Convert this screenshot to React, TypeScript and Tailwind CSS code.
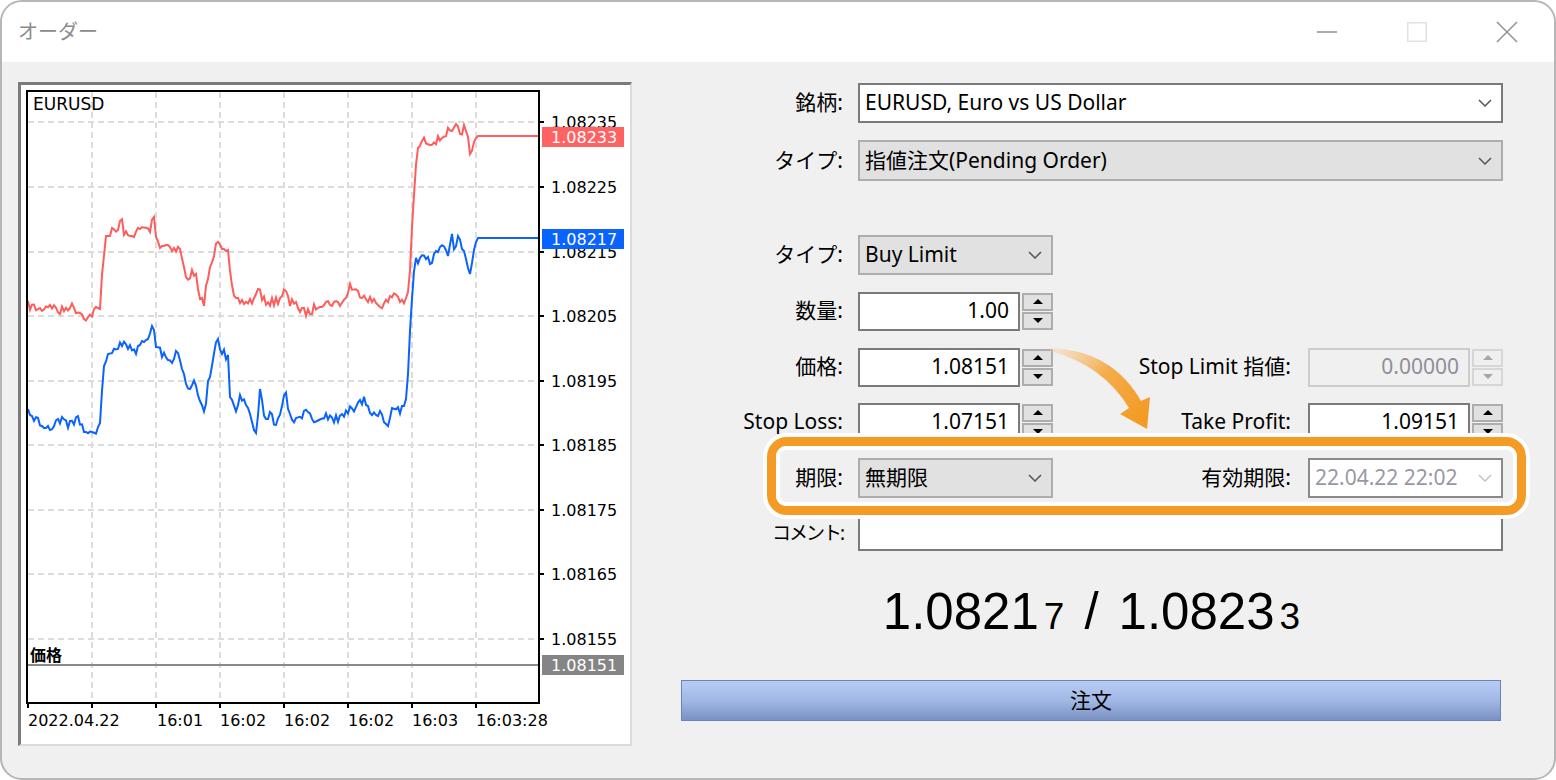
import React from "react";

const redKeys = [
  [28, 305], [40, 310], [50, 304], [60, 312], [70, 305], [80, 312], [88, 318], [95, 310], [100, 310],
  [103, 260], [106, 235], [112, 232], [118, 230], [121, 218], [125, 235], [130, 237], [135, 232],
  [140, 230], [145, 228], [150, 232], [153, 212], [157, 240], [160, 245], [170, 245], [175, 250],
  [180, 248], [183, 265], [186, 278], [195, 272], [198, 290], [200, 302], [204, 302], [207, 282],
  [210, 270], [214, 255], [218, 238], [222, 245], [228, 248], [231, 285], [235, 302], [245, 302],
  [255, 300], [258, 285], [262, 300], [272, 302], [278, 300], [285, 290], [290, 305], [296, 300],
  [300, 312], [310, 312], [320, 303], [340, 303], [345, 300], [350, 285], [355, 292], [365, 295],
  [370, 300], [380, 305], [388, 302], [395, 292], [400, 300], [406, 302], [409, 290], [412, 230],
  [415, 175], [418, 150], [421, 142], [438, 140], [442, 137], [447, 131], [452, 135], [456, 128],
  [460, 133], [464, 128], [468, 140], [471, 158], [474, 142], [477, 136], [539, 136],
];

const blueKeys = [
  [28, 413], [35, 420], [42, 422], [48, 428], [55, 425], [62, 420], [70, 425], [78, 420], [84, 428],
  [87, 437], [92, 428], [97, 430], [100, 427], [102, 392], [104, 363], [108, 352], [118, 350],
  [122, 343], [128, 348], [135, 352], [142, 345], [148, 342], [152, 323], [156, 345], [162, 355],
  [168, 360], [172, 365], [178, 350], [182, 365], [186, 383], [190, 390], [195, 383], [200, 397],
  [205, 410], [208, 382], [211, 370], [215, 345], [218, 343], [222, 350], [228, 358], [230, 393],
  [235, 410], [240, 397], [246, 405], [251, 420], [256, 430], [260, 393], [265, 420], [270, 415],
  [276, 425], [282, 405], [285, 392], [290, 415], [296, 420], [305, 413], [315, 420], [325, 415],
  [335, 420], [345, 413], [355, 408], [365, 400], [370, 410], [375, 418], [380, 408], [385, 422],
  [388, 425], [393, 405], [397, 412], [402, 408], [406, 400], [408, 370], [410, 330], [413, 285],
  [415, 258], [420, 262], [425, 255], [430, 265], [435, 255], [440, 250], [443, 240], [448, 252],
  [452, 235], [455, 252], [458, 235], [462, 250], [466, 260], [470, 270], [474, 250], [477, 238],
  [539, 238],
];

// turn the key points into a jagged tick line
function series(keys: number[][], seed: number) {
  let s = seed;
  const rnd = () => {
    s = (s * 16807) % 2147483647;
    return s / 2147483647;
  };
  const pts: string[] = [];
  let k = 0;
  for (let x = 28; x <= 539; x += 2) {
    while (k < keys.length - 2 && keys[k + 1][0] < x) k++;
    const [x0, y0] = keys[k];
    const [x1, y1] = keys[k + 1];
    const t = Math.min(1, Math.max(0, (x - x0) / (x1 - x0)));
    let y = y0 + (y1 - y0) * t;
    if (x < 474) y += Math.round((rnd() - 0.5) * 9);
    pts.push(`${x},${y.toFixed(1)}`);
  }
  pts.push(`539,${keys[keys.length - 1][1]}`);
  return pts.join(" ");
}

const hy = [122, 187, 252, 316, 381, 445, 510, 574, 639];
const prices = ["1.08235", "1.08225", "1.08215", "1.08205", "1.08195", "1.08185", "1.08175", "1.08165", "1.08155"];
const vx = [92, 156, 220, 284, 348, 412, 476];
const ticks = [28, 92, 156, 220, 284, 348, 412, 476];
const times: [number, string][] = [
  [28, "2022.04.22"], [157, "16:01"], [220, "16:02"], [284, "16:02"], [348, "16:02"], [412, "16:03"], [476, "16:03:28"],
];

const Chart = () => (
  <div className="w-[614px] h-[664px] ml-[16px] mt-[20px] bg-white border-t-[3px] border-l-[3px] border-t-[#7b7b7b] border-l-[#7b7b7b] border-r-2 border-b-2 border-r-[#dcdcdc] border-b-[#dcdcdc]">
    <svg width="609" height="659" viewBox="21 85 609 659" fontFamily="'DejaVu Sans', 'Noto Sans CJK JP', sans-serif" fontSize="16">
      {hy.map((y) => (
        <line key={y} x1="28" x2="538" y1={y} y2={y} stroke="#dcdcdc" strokeWidth="2" strokeDasharray="6 4" />
      ))}
      {vx.map((x) => (
        <line key={x} x1={x} x2={x} y1="92" y2="702" stroke="#dcdcdc" strokeWidth="2" strokeDasharray="6 4" />
      ))}
      <line x1="28" x2="538" y1="665" y2="665" stroke="#8a8a8a" strokeWidth="2" />
      <polyline points={series(redKeys, 7)} fill="none" stroke="#ff5c5c" strokeWidth="2" />
      <polyline points={series(blueKeys, 19)} fill="none" stroke="#0a62ff" strokeWidth="2" />
      <rect x="27" y="91" width="512" height="612" fill="none" stroke="#000" strokeWidth="2" />
      {hy.map((y) => (
        <line key={y} x1="539" x2="544" y1={y} y2={y} stroke="#000" strokeWidth="2" />
      ))}
      {ticks.map((x) => (
        <line key={x} x1={x} x2={x} y1="703" y2="708" stroke="#000" strokeWidth="2" />
      ))}
      {hy.map((y, i) => (
        <text key={y} x="551" y={y + 6} fill="#000">{prices[i]}</text>
      ))}
      <rect x="542" y="127" width="82" height="20" fill="#ff6262" />
      <text x="551" y="143" fill="#fff">1.08233</text>
      <rect x="542" y="229" width="82" height="20" fill="#0a62ff" />
      <text x="551" y="245" fill="#fff">1.08217</text>
      <rect x="542" y="655" width="82" height="20" fill="#858585" />
      <text x="551" y="671" fill="#fff">1.08151</text>
      <text x="33" y="110" fill="#000" fontSize="17">EURUSD</text>
      <text x="30" y="661" fill="#000" fontWeight="bold">価格</text>
      {times.map(([x, t], i) => (
        <text key={i} x={x} y="726" fill="#000">{t}</text>
      ))}
    </svg>
  </div>
);

const Chev = ({ color = "#555" }: { color?: string }) => (
  <svg width="14" height="8" viewBox="0 0 14 8" className="shrink-0">
    <polyline points="1,1 7,7 13,1" fill="none" stroke={color} strokeWidth="1.5" />
  </svg>
);

const Combo = ({ text, box, textCls = "text-black", chev }: any) => (
  <div className={`h-[40px] border-2 flex items-center pl-[5px] pr-[9px] ${box}`}>
    <span className={`flex-1 text-[21px] whitespace-nowrap ${textCls}`}>{text}</span>
    <Chev color={chev} />
  </div>
);

const Spinner = ({ disabled }: { disabled?: boolean }) => {
  const b = disabled ? "border-[#d6d6d6] bg-[#efefef]" : "border-[#adadad] bg-[#e1e1e1]";
  const c = disabled ? "#a5a5a5" : "#000";
  return (
    <div className="ml-[2px] w-[31px] h-[37px] flex flex-col gap-[1px]">
      <div className={`flex-1 border-2 flex items-center justify-center ${b}`}>
        <svg width="10" height="5"><polygon points="0,5 5,0 10,5" fill={c} /></svg>
      </div>
      <div className={`flex-1 border-2 flex items-center justify-center ${b}`}>
        <svg width="10" height="5"><polygon points="0,0 10,0 5,5" fill={c} /></svg>
      </div>
    </div>
  );
};

const NumField = ({ value, disabled }: { value: string; disabled?: boolean }) => (
  <div className="flex items-center">
    <div
      className={`w-[162px] h-[39px] border-2 flex items-center justify-end pr-[9px] text-[21px] ${
        disabled ? "border-[#cccccc] bg-[#f0f0f0] text-[#8e8e99]" : "border-[#7a7a7a] bg-white text-black"
      }`}
    >
      {value}
    </div>
    <Spinner disabled={disabled} />
  </div>
);

const Label = ({ children }: { children: React.ReactNode }) => (
  <div className="w-[163px] shrink-0 text-right text-[21px] text-black whitespace-nowrap">{children}</div>
);

const Side = ({ label, children }: { label: string; children: React.ReactNode }) => (
  <div className="flex-1 flex items-center justify-end">
    <span className="text-[21px] text-black mr-[17px] whitespace-nowrap">{label}</span>
    {children}
  </div>
);

const Form = () => (
  <div className="flex-1 ml-[48px] mr-[51px] pt-[21px] flex flex-col">
    <div className="flex items-center h-[40px]">
      <Label>銘柄:</Label>
      <div className="flex-1 ml-[15px]">
        <Combo text="EURUSD, Euro vs US Dollar" box="bg-white border-[#7a7a7a]" />
      </div>
    </div>
    <div className="flex items-center h-[41px] mt-[17px]">
      <Label>タイプ:</Label>
      <div className="flex-1 ml-[15px]">
        <Combo text="指値注文(Pending Order)" box="bg-[#e1e1e1] border-[#adadad] h-[41px]" />
      </div>
    </div>

    <div className="flex items-center h-[40px] mt-[54px]">
      <Label>タイプ:</Label>
      <div className="w-[195px] ml-[15px]">
        <Combo text="Buy Limit" box="bg-[#e1e1e1] border-[#adadad]" />
      </div>
    </div>
    <div className="flex items-center h-[40px] mt-[16px]">
      <Label>数量:</Label>
      <div className="ml-[15px]">
        <NumField value="1.00" />
      </div>
    </div>
    <div className="flex items-center h-[40px] mt-[16px]">
      <Label>価格:</Label>
      <div className="ml-[15px]">
        <NumField value="1.08151" />
      </div>
      <Side label="Stop Limit 指値:">
        <NumField value="0.00000" disabled />
      </Side>
    </div>
    <div className="flex items-center h-[40px] mt-[15px]">
      <Label>Stop Loss:</Label>
      <div className="ml-[15px]">
        <NumField value="1.07151" />
      </div>
      <Side label="Take Profit:">
        <NumField value="1.09151" />
      </Side>
    </div>

    <div className="relative flex items-center h-[40px] mt-[16px]">
      <div className="absolute left-[83px] -right-[27px] -top-[25px] -bottom-[21px] bg-white p-[4px] rounded-[24px]">
        <div className="w-full h-full border-[9px] border-[#f39b24] rounded-[20px]">
          <div className="w-full h-full border-[4px] border-white rounded-[10px] bg-[#f0f0f0]" />
        </div>
      </div>
      <div className="relative z-10 flex items-center w-full">
        <Label>期限:</Label>
        <div className="w-[195px] ml-[15px]">
          <Combo text="無期限" box="bg-[#e1e1e1] border-[#adadad] h-[39px]" />
        </div>
        <Side label="有効期限:">
          <div className="w-[195px]">
            <Combo text="22.04.22 22:02" box="bg-white border-[#8a8a8a] h-[39px] pl-[3px]" textCls="text-[#9898a4]" chev="#c4c4c4" />
          </div>
        </Side>
      </div>
    </div>

    <div className="flex items-center h-[36px] mt-[17px]">
      <Label>
        <span className="text-[19px] tracking-[-2px]">コメント:</span>
      </Label>
      <div className="flex-1 ml-[15px] h-[36px] border-2 border-[#7a7a7a] bg-white" />
    </div>

    <div className="h-[60px] mt-[31px] flex items-baseline justify-center font-['Liberation_Sans',sans-serif] text-black leading-[60px]">
      <span className="text-[51px]">1.0821</span>
      <span className="text-[37px] ml-[5px]">7</span>
      <span className="text-[51px] mx-[20px]">/</span>
      <span className="text-[51px]">1.0823</span>
      <span className="text-[37px] ml-[5px]">3</span>
    </div>

    <div className="mt-[38px] ml-[1px] mr-[2px] h-[41px] border border-[#6b83b4] bg-linear-to-b from-[#b7ccf4] via-[#a2b8e5] to-[#7a92c4] flex items-center justify-center text-[21px] text-black">
      注文
    </div>
  </div>
);

const Arrow = () => (
  <svg className="absolute inset-0 pointer-events-none" width="1552" height="776" viewBox="2 2 1552 776">
    <defs>
      <linearGradient id="ag" x1="1050" y1="350" x2="1140" y2="420" gradientUnits="userSpaceOnUse">
        <stop offset="0" stopColor="#f7c98a" stopOpacity="0.3" />
        <stop offset="0.5" stopColor="#f4ad4c" />
        <stop offset="1" stopColor="#f39b24" />
      </linearGradient>
    </defs>
    <path
      d="M1050,348 Q1112,350 1141,401 L1150,397 L1147,429 L1120,414 L1129,408 Q1103,365 1050,351 Z"
      fill="url(#ag)"
    />
  </svg>
);

const App = () => (
  <div className="w-[1556px] h-[780px] bg-white font-['Noto_Sans','Noto_Sans_CJK_JP',sans-serif]">
    <div className="relative w-full h-full rounded-[22px] border-2 border-[#b6b6b6] overflow-hidden flex flex-col bg-[#f0f0f0]">
      <div className="h-[60px] bg-white flex items-center shrink-0">
        <span className="ml-[16px] text-[20px] text-[#8c8c8c]">オーダー</span>
        <div className="ml-auto mr-[2px] flex">
          <div className="w-[90px] h-[60px] flex items-center justify-center">
            <svg width="20" height="20"><line x1="0" x2="20" y1="10" y2="10" stroke="#8f8f8f" strokeWidth="1.5" /></svg>
          </div>
          <div className="w-[90px] h-[60px] flex items-center justify-center">
            <svg width="20" height="20"><rect x="0.75" y="0.75" width="18.5" height="18.5" fill="none" stroke="#e2e2e2" strokeWidth="1.5" /></svg>
          </div>
          <div className="w-[90px] h-[60px] flex items-center justify-center">
            <svg width="22" height="22">
              <line x1="1" y1="1" x2="21" y2="21" stroke="#8f8f8f" strokeWidth="1.5" />
              <line x1="21" y1="1" x2="1" y2="21" stroke="#8f8f8f" strokeWidth="1.5" />
            </svg>
          </div>
        </div>
      </div>
      <div className="flex-1 flex">
        <Chart />
        <Form />
      </div>
      <Arrow />
    </div>
  </div>
);

export default App;
